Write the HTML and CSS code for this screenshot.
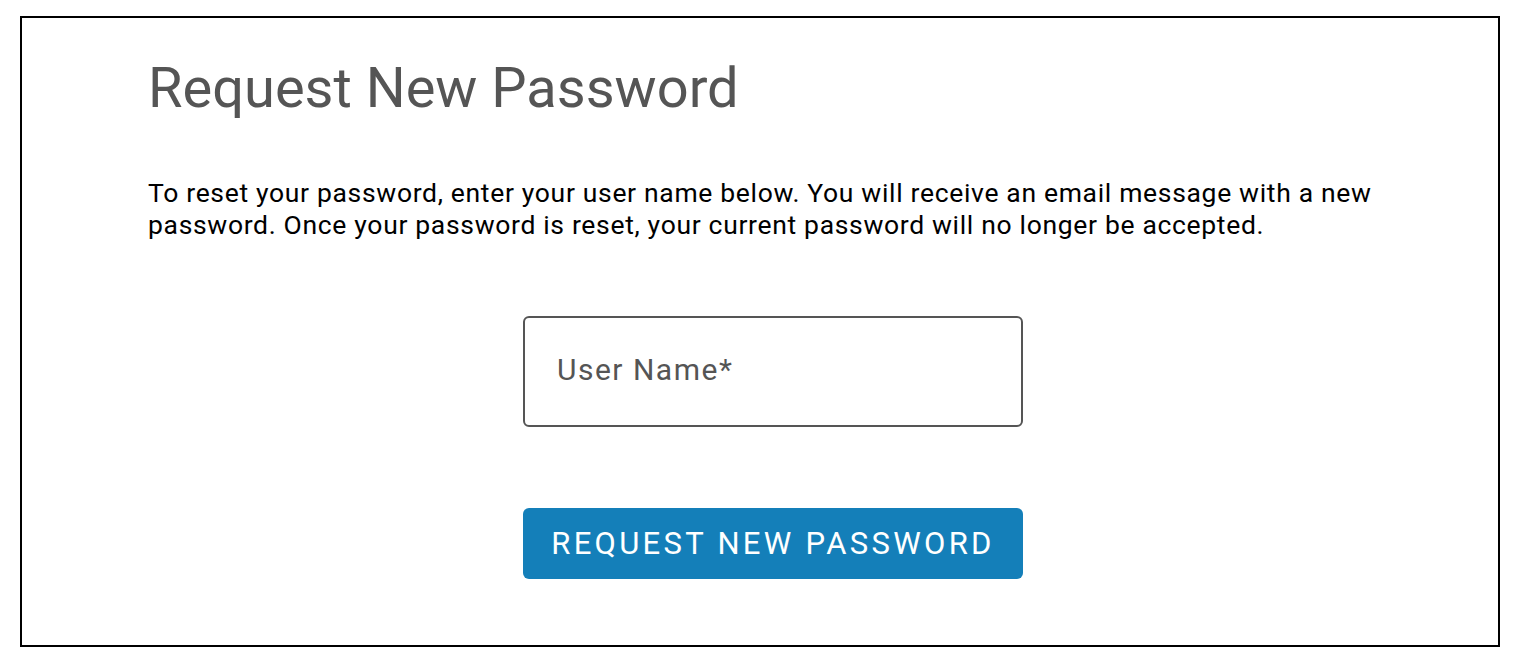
FILE: index.html
```html
<!DOCTYPE html>
<html lang="en">

<head>
  <meta charset="UTF-8">
  <meta name="viewport" content="width=device-width, initial-scale=1.0">
  <title>Request New Password</title>
  <link rel="stylesheet" href="styles.css">
</head>

<body>
  <div class="frame">
    <div class="content">
      <h1 class="title">Request New Password</h1>
      <p class="intro">To reset your password, enter your user name below. You will receive an email message with a new password. Once your password is reset, your current password will no longer be accepted.</p>

      <form class="reset-form">
        <input class="field" type="text" placeholder="User Name*">
        <button class="btn" type="button">Request New Password</button>
      </form>
    </div>
  </div>
</body>

</html>
```

FILE: styles.css
```css
html,
body {
  margin: 0;
  padding: 0;
  background: #fff;
  font-family: Roboto, "Liberation Sans", Arial, sans-serif;
}

body {
  padding: 16px 20px 0;
}

.frame {
  box-sizing: border-box;
  width: 1480px;
  height: 631px;
  border: 2px solid #000;
}

.content {
  padding: 0 100px 0 126px;
}

.title {
  margin: 0;
  padding-top: 38px;
  font-size: 56px;
  font-weight: 400;
  line-height: 64px;
  color: #555;
}

.intro {
  margin: 57px 0 0;
  font-size: 26.5px;
  line-height: 32px;
  letter-spacing: 0.67px;
  color: #000;
}

.reset-form {
  display: flex;
  flex-direction: column;
  align-items: center;
  gap: 81px;
  margin-top: 75px;
}

.field {
  box-sizing: border-box;
  width: 500px;
  height: 111px;
  padding: 0 32px 5px;
  border: 2px solid #555;
  border-radius: 6px;
  font-family: inherit;
  font-size: 30px;
  letter-spacing: 1.5px;
  color: #333;
  outline: none;
}

.field::placeholder {
  color: #555;
}

.btn {
  width: 500px;
  height: 71px;
  border: 0;
  border-radius: 6px;
  background: #147fb9;
  color: #fff;
  font-family: inherit;
  font-size: 31px;
  font-weight: 400;
  letter-spacing: 3.3px;
  text-transform: uppercase;
  cursor: pointer;
}
```
